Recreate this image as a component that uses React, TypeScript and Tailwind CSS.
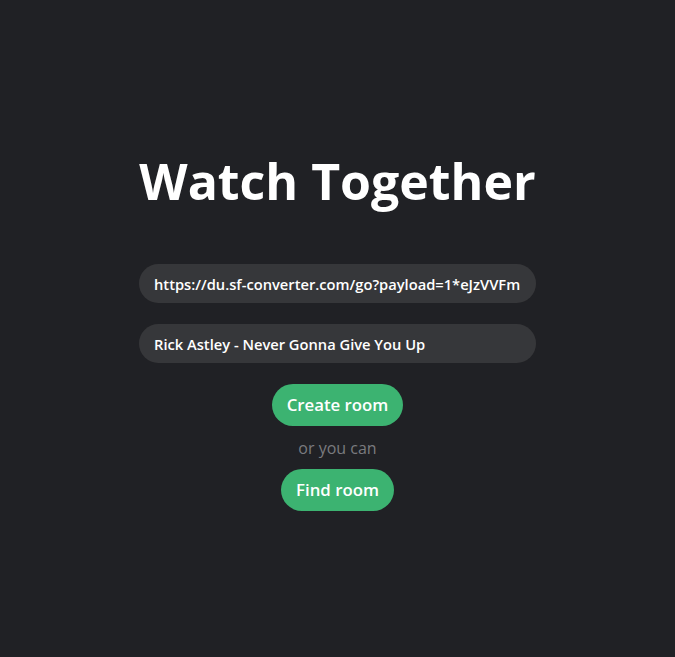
import React from 'react';

export default function App() {
    return (
        <div className="min-h-screen w-full bg-[#202125] flex flex-col items-center pt-[149px] font-['Open_Sans',sans-serif]">
            <h1 className="text-[50px] leading-[64px] font-bold text-white">Watch Together</h1>

            <div className="mt-[51px] flex flex-col gap-[21px] w-[397px]">
                <input
                    readOnly
                    value="https://du.sf-converter.com/go?payload=1*eJzVVFm"
                    className="h-[39px] w-full rounded-full bg-[#36373a] px-[15px] text-[14.7px] font-semibold text-white outline-none"
                />
                <input
                    readOnly
                    value="Rick Astley - Never Gonna Give You Up"
                    className="h-[39px] w-full rounded-full bg-[#36373a] px-[15px] text-[14.7px] font-semibold text-white outline-none"
                />
            </div>

            <button className="mt-[21px] h-[42px] px-[15px] rounded-full bg-[#3cb371] text-white text-[16.8px] font-semibold">
                Create room
            </button>
            <span className="mt-[10px] text-[16px] leading-[24px] text-[#7a7b7f]">or you can</span>
            <button className="mt-[9px] h-[42px] px-[15px] rounded-full bg-[#3cb371] text-white text-[16.8px] font-semibold">
                Find room
            </button>
        </div>
    );
}
